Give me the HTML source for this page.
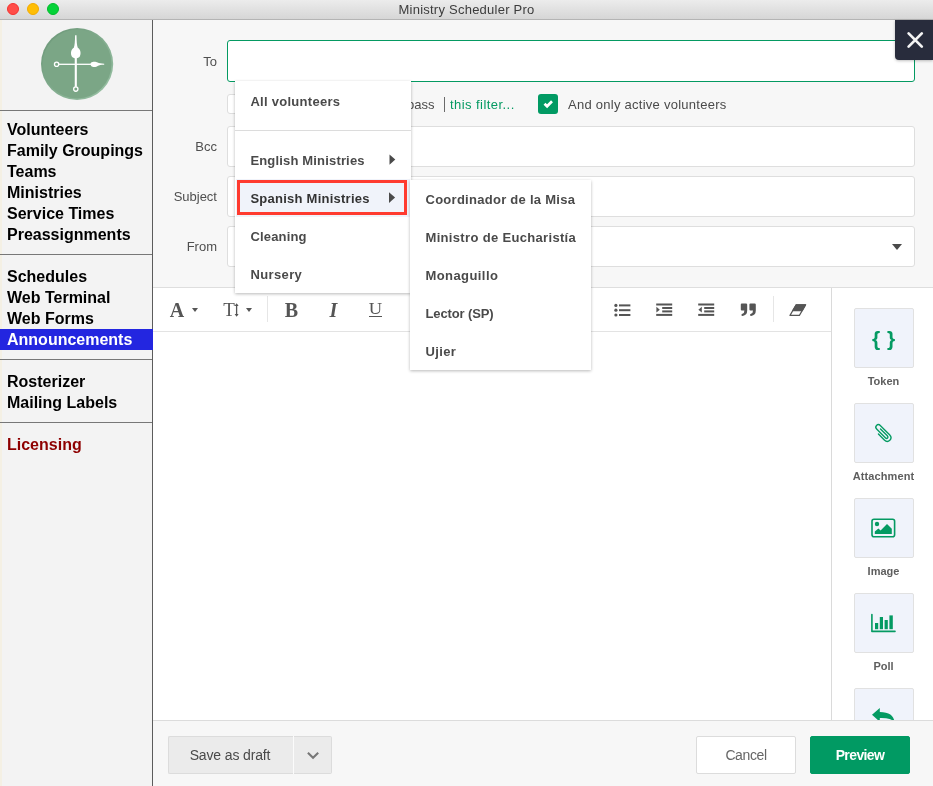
<!DOCTYPE html>
<html lang="en">
<head>
<meta charset="utf-8">
<title>Ministry Scheduler Pro</title>
<style>
*{box-sizing:border-box;margin:0;padding:0}
html,body{width:933px;height:786px;overflow:hidden;background:#f7f7f7}
body{position:relative;will-change:transform;font-family:"Liberation Sans",sans-serif;font-size:13px;color:#4a4a4a}
.abs{position:absolute}
/* title bar */
#titlebar{left:0;top:0;width:933px;height:20px;background:linear-gradient(#ececec,#d6d6d6);border-bottom:1px solid #b4b4b4;text-align:center;font-size:13px;line-height:19px;color:#3c3c3c;letter-spacing:.24px}
.tl{position:absolute;top:3px;width:12px;height:12px;border-radius:50%}
/* sidebar */
#sidebar{left:0;top:20px;width:153px;height:766px;background:#f3f3f3;border-right:1px solid #5c5c5c}
#sidebar .edge{position:absolute;left:0;top:0;width:2px;height:766px;background:#f4f0e4}
.sdiv{position:absolute;left:0;width:152px;height:1px;background:#777}
.sitem{position:absolute;left:7px;font-weight:bold;font-size:16px;line-height:21px;color:#000;white-space:nowrap}
#selrow{left:0;top:329px;width:153px;height:21px;background:#2326e0}
/* main form */
#main{left:153px;top:20px;width:780px;height:766px;background:#f7f7f7}
.lbl{position:absolute;width:64px;text-align:right;left:153px;font-size:13px;line-height:16px;color:#4f4f4f}
.field{position:absolute;left:227px;width:688px;height:40px;background:#fff;border:1px solid #dedede;border-radius:3px}
/* menus */
.menu{position:absolute;background:#fff;box-shadow:0 1px 3px rgba(0,0,0,.28)}
.mi{position:absolute;font-weight:bold;font-size:13px;line-height:16px;color:#4a4a4a;white-space:nowrap}
.arrow{position:absolute;width:0;height:0;border-left:6.2px solid #4a4a4a;border-top:5.3px solid transparent;border-bottom:5.3px solid transparent}
/* toolbar */
#editor{left:153px;top:288px;width:679px;height:432px;background:#fff;border-right:1px solid #dadada}
#tbline{left:153px;top:331px;width:678px;height:1px;background:#e3e3e3}
.tsep{position:absolute;top:296px;width:1px;height:26px;background:#e6e6e6}
/* right panel */
.rbox{position:absolute;left:854px;width:60px;height:60px;background:#f0f3fb;border:1px solid #e1e1e1;border-radius:2px}
.rlbl{position:absolute;left:833.5px;width:100px;text-align:center;font-size:11px;line-height:14px;font-weight:bold;color:#5e5e5e}
/* footer */
#footer{left:153px;top:720px;width:780px;height:66px;background:#f7f7f7;border-top:1px solid #dcdcdc}
.btn{position:absolute;top:736px;height:38px;border:1px solid #dcdcdc;border-radius:2px;text-align:center;font-size:14px;line-height:36px;color:#4a4a4a}
</style>
</head>
<body>
<!-- TITLE BAR -->
<div id="titlebar" class="abs">Ministry Scheduler Pro
  <div class="tl" style="left:7px;background:#ff4d48;border:1px solid #f5322f"></div>
  <div class="tl" style="left:27px;background:#ffbe05;border:1px solid #f3aa00"></div>
  <div class="tl" style="left:47px;background:#05d338;border:1px solid #02bb2c"></div>
</div>

<!-- SIDEBAR -->
<div id="sidebar" class="abs"><div class="edge"></div></div>
<svg class="abs" style="left:40px;top:27px" width="74" height="74" viewBox="0 0 74 74">
  <defs><linearGradient id="rim" x1="0.15" y1="0.15" x2="0.85" y2="0.85"><stop offset="0" stop-color="#719c7d"/><stop offset="1" stop-color="#93bc9f"/></linearGradient></defs>
  <circle cx="37.1" cy="37" r="36.1" fill="url(#rim)"/>
  <circle cx="37.1" cy="37" r="34.4" fill="#7ba686"/>
  <g fill="#fff" stroke="none">
    <rect x="34.75" y="29" width="2.1" height="30.8"/>
    <rect x="18.8" y="36.65" width="34" height="1.3"/>
    <path d="M35.1 8.2 H36.5 C36.6 14 36.9 18.6 37.8 20.8 C40.8 22.4 41.2 27 39.8 29.4 C38.4 31.8 33.2 31.8 31.8 29.4 C30.4 27 30.8 22.4 33.8 20.8 C34.7 18.6 35 14 35.1 8.2 Z"/>
    <path d="M64.2 36.8 V37.8 C61 37.9 59.2 38.2 57.6 39 C56.2 40.2 52.6 40.3 51.2 39 C50.2 38 50.2 36.6 51.2 35.6 C52.6 34.3 56.2 34.4 57.6 35.6 C59.2 36.4 61 36.7 64.2 36.8 Z"/>
  </g>
  <circle cx="16.6" cy="37.3" r="2.15" fill="#7ba686" stroke="#fff" stroke-width="1.3"/>
  <circle cx="35.8" cy="62.1" r="2.15" fill="#7ba686" stroke="#fff" stroke-width="1.3"/>
</svg>
<div class="sdiv" style="top:110px"></div>
<div class="sitem" style="top:119px">Volunteers</div>
<div class="sitem" style="top:140px">Family Groupings</div>
<div class="sitem" style="top:161px">Teams</div>
<div class="sitem" style="top:182px">Ministries</div>
<div class="sitem" style="top:203px">Service Times</div>
<div class="sitem" style="top:224px">Preassignments</div>
<div class="sdiv" style="top:254px"></div>
<div class="sitem" style="top:266px">Schedules</div>
<div class="sitem" style="top:287px">Web Terminal</div>
<div class="sitem" style="top:308px">Web Forms</div>
<div id="selrow" class="abs"></div>
<div class="sitem" style="top:329px;color:#fff">Announcements</div>
<div class="sdiv" style="top:359px"></div>
<div class="sitem" style="top:371px">Rosterizer</div>
<div class="sitem" style="top:392px">Mailing Labels</div>
<div class="sdiv" style="top:422px"></div>
<div class="sitem" style="top:434px;color:#8e0000">Licensing</div>

<!-- MAIN FORM -->
<div class="lbl" style="top:54px">To</div>
<div class="field" style="top:40px;height:42px;border-color:#049a62"></div>
<div class="abs" style="left:227px;top:94px;width:20px;height:20px;background:#fff;border:1px solid #dedede;border-radius:3px"></div>
<div class="abs" style="left:407px;top:97px;font-size:13px;line-height:16px;color:#4a4a4a">pass</div>
<div class="abs" style="left:444px;top:97px;width:1px;height:15px;background:#6a6a6a"></div>
<div class="abs" style="left:450px;top:97px;font-size:13px;line-height:16px;color:#049a62;white-space:nowrap;letter-spacing:0.44px">this filter...</div>
<div class="abs" style="left:538px;top:94px;width:20px;height:20px;background:#019a63;border-radius:3px">
  <svg width="20" height="20" viewBox="0 0 20 20" style="display:block"><path d="M6.5 9.7 L9.1 12.3 L14 7.3" fill="none" stroke="#fff" stroke-width="2.7"/></svg>
</div>
<div class="abs" style="left:568px;top:97px;font-size:13px;line-height:16px;color:#4a4a4a;white-space:nowrap;letter-spacing:0.26px">And only active volunteers</div>
<div class="lbl" style="top:139px">Bcc</div>
<div class="field" style="top:126px;height:41px"></div>
<div class="lbl" style="top:189px">Subject</div>
<div class="field" style="top:176px;height:41px"></div>
<div class="lbl" style="top:239px">From</div>
<div class="field" style="top:226px;height:41px"></div>
<div class="abs" style="left:892px;top:244px;width:0;height:0;border-top:6px solid #4a4a4a;border-left:5px solid transparent;border-right:5px solid transparent"></div>

<!-- EDITOR -->
<div id="editor" class="abs"></div>
<div class="abs" style="left:153px;top:287px;width:780px;height:1px;background:#dedede"></div>
<div id="tbline" class="abs"></div>
<div id="toolbar">
<div class="abs" style="left:168px;top:298px;width:18px;height:24px;font:bold 20px/24px 'Liberation Serif',serif;color:#555;text-align:center">A</div>
<div class="abs" style="left:192px;top:308px;width:0;height:0;border-top:4px solid #555;border-left:3.5px solid transparent;border-right:3.5px solid transparent"></div>
<div class="abs" style="left:222px;top:298px;width:14px;height:24px;font:19px/24px 'Liberation Serif',serif;color:#555;text-align:center">T</div>
<svg class="abs" style="left:233px;top:302px" width="8" height="16" viewBox="0 0 8 16"><path d="M3.6 2.5 V13.5" stroke="#555" stroke-width="1.3" fill="none"/><path d="M1.6 4 L3.6 1.2 L5.6 4 Z M1.6 12 L3.6 14.8 L5.6 12 Z" fill="#555"/></svg>
<div class="abs" style="left:246px;top:308px;width:0;height:0;border-top:4px solid #555;border-left:3.5px solid transparent;border-right:3.5px solid transparent"></div>
<div class="tsep" style="left:267px"></div>
<div class="abs" style="left:281px;top:298px;width:21px;height:24px;font:bold 20px/24px 'Liberation Serif',serif;color:#555;text-align:center">B</div>
<div class="abs" style="left:323px;top:298px;width:21px;height:24px;font:italic bold 20px/24px 'Liberation Serif',serif;color:#555;text-align:center">I</div>
<div class="abs" style="left:365px;top:298px;width:21px;height:22px;font:17px/22px 'Liberation Serif',serif;color:#555;text-align:center;transform:scaleX(1.09)">U</div>
<div class="abs" style="left:369px;top:316px;width:13px;height:1px;background:#555"></div>
<svg class="abs" style="left:614px;top:302px" width="17" height="16" viewBox="0 0 17 16"><g fill="#555"><circle cx="1.9" cy="3.4" r="1.6"/><circle cx="1.9" cy="8.2" r="1.6"/><circle cx="1.9" cy="13" r="1.6"/><rect x="5" y="2.4" width="11.4" height="2"/><rect x="5" y="7.2" width="11.4" height="2"/><rect x="5" y="12" width="11.4" height="2"/></g></svg>
<svg class="abs" style="left:656px;top:302px" width="17" height="16" viewBox="0 0 17 16"><g fill="#555"><rect x="0.2" y="1.5" width="16" height="2"/><rect x="6.2" y="5" width="10" height="2"/><rect x="6.2" y="8.4" width="10" height="2"/><rect x="0.2" y="11.9" width="16" height="2"/><path d="M0.4 4.8 L3.8 7.7 L0.4 10.6 Z"/></g></svg>
<svg class="abs" style="left:698px;top:302px" width="17" height="16" viewBox="0 0 17 16"><g fill="#555"><rect x="0.2" y="1.5" width="16" height="2"/><rect x="6.2" y="5" width="10" height="2"/><rect x="6.2" y="8.4" width="10" height="2"/><rect x="0.2" y="11.9" width="16" height="2"/><path d="M3.8 4.8 L0.4 7.7 L3.8 10.6 Z"/></g></svg>
<svg class="abs" style="left:740px;top:302px" width="17" height="16" viewBox="0 0 17 16"><g fill="#555"><path d="M1.8 1.4 H6 Q7.2 1.4 7.2 2.6 V8.6 Q7.2 13.4 2.6 14 Q1.4 14 1.4 13 Q1.4 12 2.4 11.8 Q4.4 11.4 4.4 8.6 H1.8 Q0.8 8.6 0.8 7.6 V2.6 Q0.8 1.4 1.8 1.4 Z"/><path d="M10.4 1.4 H14.6 Q15.8 1.4 15.8 2.6 V8.6 Q15.8 13.4 11.2 14 Q10 14 10 13 Q10 12 11 11.8 Q13 11.4 13 8.6 H10.4 Q9.4 8.6 9.4 7.6 V2.6 Q9.4 1.4 10.4 1.4 Z"/></g></svg>
<div class="tsep" style="left:773px"></div>
<svg class="abs" style="left:788px;top:302px" width="20" height="16" viewBox="0 0 20 16"><path d="M8.2 2.8 H17.6 L11.4 13.4 H2 Z" fill="#fff" stroke="#555" stroke-width="1.2" stroke-linejoin="round"/><path d="M8.2 2.8 H17.6 L14.2 8.6 H4.8 Z" fill="#555" stroke="#555" stroke-width="1.2" stroke-linejoin="round"/></svg>
</div>

<!-- RIGHT PANEL -->
<div class="abs" style="left:832px;top:288px;width:101px;height:432px;background:#fff"></div>
<div id="rpanel">
<div class="rbox" style="top:308px"><div style="position:absolute;left:17.1px;top:18px;white-space:nowrap;font:bold 21px/24px 'Liberation Sans',sans-serif;color:#049a62;letter-spacing:6.8px">{}</div></div>
<div class="rlbl" style="top:374px">Token</div>
<div class="rbox" style="top:403px">
<svg width="58" height="58" viewBox="0 0 58 58" style="display:block"><g transform="translate(27.6 29) rotate(-45) scale(.88)" fill="none" stroke="#049a62" stroke-width="1.55" stroke-linecap="round"><path d="M-4.2 -2.5 V7 Q-4.2 11.6 0 11.6 Q4.2 11.6 4.2 7 V-7.6 Q4.2 -11 1.2 -11 Q-1.6 -11 -1.6 -7.6 V6 Q-1.6 8 0 8 Q1.6 8 1.6 6 V-5"/></g></svg></div>
<div class="rlbl" style="top:469px;letter-spacing:.12px">Attachment</div>
<div class="rbox" style="top:498px">
<svg width="58" height="58" viewBox="0 0 58 58" style="display:block"><rect x="17" y="20.2" width="22.6" height="17.6" rx="2" fill="none" stroke="#049a62" stroke-width="1.6"/><circle cx="22" cy="25" r="2.2" fill="#049a62"/><path d="M19.8 35 V32.6 L23.4 29.4 L25.6 31.4 L32 25 L36.8 29.8 V35 Z" fill="#049a62"/></svg></div>
<div class="rlbl" style="top:564px">Image</div>
<div class="rbox" style="top:593px">
<svg width="58" height="58" viewBox="0 0 58 58" style="display:block"><path d="M16.9 20.6 V37.4 H40" fill="none" stroke="#049a62" stroke-width="1.6" stroke-linecap="round" stroke-linejoin="round"/><g fill="#049a62"><rect x="20" y="29" width="3.2" height="6.2"/><rect x="24.8" y="23" width="3.2" height="12.2"/><rect x="29.6" y="26" width="3.2" height="9.2"/><rect x="34.4" y="21.4" width="3.4" height="13.8"/></g></svg></div>
<div class="rlbl" style="top:659px">Poll</div>
<div class="rbox" style="top:688px">
<svg width="58" height="58" viewBox="0 0 58 58" style="display:block"><path d="M17 25.8 L24.8 19 V23 Q38.6 23 39.4 33 Q36 28.6 24.8 29 V32.8 Z" fill="#049a62"/></svg></div>
</div>

<!-- FOOTER -->
<div id="footer" class="abs"></div>
<div class="btn" style="left:168px;width:125px;background:#ebebeb;border-right:none;border-radius:2px 0 0 2px;letter-spacing:-.14px;padding-right:2px;line-height:36.6px">Save as draft</div>
<div class="abs" style="left:293px;top:736px;width:1px;height:38px;background:#fbfbfb"></div>
<div class="btn" style="left:294px;width:38px;background:#ebebeb;border-left:none;border-radius:0 2px 2px 0"></div>
<svg class="abs" style="left:294px;top:736px" width="38" height="38" viewBox="0 0 38 38"><path d="M13.9 16.8 L19.05 21.7 L24.2 16.8" fill="none" stroke="#777" stroke-width="2.1"/></svg>
<div class="btn" style="left:696px;width:100px;background:#fff;letter-spacing:-.4px;color:#666">Cancel</div>
<div class="btn" style="left:810px;width:100px;background:#019a63;border-color:#019a63;color:#fff;font-weight:bold;font-size:14px;letter-spacing:-.6px;line-height:37px">Preview</div>

<!-- CLOSE -->
<div class="abs" style="left:895px;top:20px;width:38px;height:40px;background:#282c3c;border-bottom-left-radius:4px;box-shadow:0 1px 3px rgba(0,0,0,.25)">
  <svg width="38" height="40" viewBox="0 0 38 40" style="display:block"><path d="M13.6 13.4 L26.8 26.6 M26.8 13.4 L13.6 26.6" stroke="#f4f4f4" stroke-width="2.7" stroke-linecap="round" fill="none"/></svg>
</div>

<!-- DROPDOWN MENUS -->
<div id="menu1" class="menu" style="left:235px;top:81px;width:176px;height:212px"></div>
<div class="abs" style="left:235px;top:130px;width:176px;height:1px;background:#dcdcdc"></div>
<div class="mi" style="left:250.4px;top:94px;letter-spacing:0.28px">All volunteers</div>
<div class="mi" style="left:250.4px;top:153px;letter-spacing:0.17px">English Ministries</div>
<svg class="abs" style="left:385px;top:150px" width="14" height="20" viewBox="0 0 14 20"><path d="M4.5 4.5 L10.3 9.6 L4.5 14.7 Z" fill="#4a4a4a"/></svg>
<div class="abs" style="left:236px;top:179px;width:174px;height:38px;background:#f0f3fa"></div>
<div class="abs" style="left:237px;top:180px;width:170px;height:35px;border:3px solid #ff3b2f"></div>
<div class="mi" style="left:250.4px;top:191px;color:#333;letter-spacing:0.25px">Spanish Ministries</div>
<svg class="abs" style="left:385px;top:188px" width="14" height="20" viewBox="0 0 14 20"><path d="M4 4.2 L10.1 9.6 L4 15 Z" fill="#4a4a4a"/></svg>
<div class="mi" style="left:250.4px;top:229px;letter-spacing:0.17px">Cleaning</div>
<div class="mi" style="left:250.4px;top:267px;letter-spacing:0.38px">Nursery</div>

<div id="menu2" class="menu" style="left:410px;top:180px;width:181px;height:190px"></div>
<div class="mi" style="left:425.5px;top:192px;letter-spacing:0.27px">Coordinador de la Misa</div>
<div class="mi" style="left:425.5px;top:230px;letter-spacing:0.33px">Ministro de Eucharistía</div>
<div class="mi" style="left:425.5px;top:268px;letter-spacing:0.42px">Monaguillo</div>
<div class="mi" style="left:425.5px;top:306px;letter-spacing:-0.13px">Lector (SP)</div>
<div class="mi" style="left:425.5px;top:344px;letter-spacing:0.35px">Ujier</div>
</body>
</html>
